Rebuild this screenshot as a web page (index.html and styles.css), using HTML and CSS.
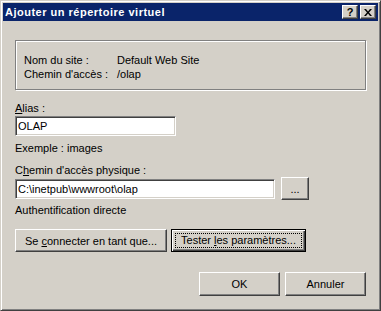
FILE: index.html
```html
<!DOCTYPE html>
<html lang="fr">
<head>
    <meta charset="UTF-8">
    <title>Ajouter un répertoire virtuel</title>
    <link rel="stylesheet" href="styles.css">
</head>
<body>
    <div class="window">
        <div class="titlebar">
            <span class="title">Ajouter un répertoire virtuel</span>
            <div class="caption-btns">
                <span class="cbtn help">?</span>
                <span class="cbtn close">
                    <svg width="8" height="7" viewBox="0 0 8 7">
                        <path d="M0 0h2l2 2.5L6 0h2L5 3.5 8 7H6L4 4.5 2 7H0l3-3.5z" fill="#000"/>
                    </svg>
                </span>
            </div>
        </div>

        <div class="content">
            <div class="group">
                <div class="info">
                    <span>Nom du site :</span><span>Default Web Site</span>
                    <span>Chemin d'accès :</span><span>/olap</span>
                </div>
            </div>

            <div class="label alias-label"><u>A</u>lias :</div>
            <input class="field alias" type="text" value="OLAP">
            <div class="label hint">Exemple : images</div>

            <div class="label path-label">C<u>h</u>emin d'accès physique :</div>
            <div class="path-row">
                <input class="field path" type="text" value="C:\inetpub\wwwroot\olap">
                <button class="btn browse">...</button>
            </div>
            <div class="label auth">Authentification directe</div>

            <div class="action-row">
                <button class="btn connect">Se <u>c</u>onnecter en tant que...</button>
                <button class="btn default test"><span class="focus">Tester <u>l</u>es paramètres...</span></button>
            </div>

            <div class="footer">
                <button class="btn ok">OK</button>
                <button class="btn cancel">Annuler</button>
            </div>
        </div>
    </div>
</body>
</html>
```

FILE: styles.css
```css
body {
    margin: 0;
    font-family: "Liberation Sans", Arial, sans-serif;
    font-size: 11px;
    color: #000;
    background: #d4d0c8;
}
.window {
    width: 381px;
    height: 311px;
    box-sizing: border-box;
    background: #d4d0c8;
    border: 1px solid;
    border-color: #d4d0c8 #404040 #404040 #d4d0c8;
    box-shadow: inset 1px 1px #fff, inset -1px -1px #808080;
    padding: 2px;
}
.titlebar {
    height: 18px;
    background: #0a246a;
    color: #fff;
    display: flex;
    align-items: center;
    justify-content: space-between;
    padding: 0 2px;
}
.title {
    font-weight: bold;
    font-size: 11px;
    letter-spacing: 0.5px;
}
.caption-btns {
    display: flex;
    gap: 2px;
}
.cbtn {
    width: 16px;
    height: 14px;
    box-sizing: border-box;
    background: #d4d0c8;
    color: #000;
    border: 1px solid;
    border-color: #fff #404040 #404040 #fff;
    box-shadow: inset -1px -1px #808080;
    display: flex;
    align-items: center;
    justify-content: center;
    font-weight: bold;
    font-size: 11px;
    line-height: 1;
}
.content {
    padding: 19px 12px 0 12px;
}
.group {
    border: 1px solid #808080;
    box-shadow: inset 1px 1px #fff, 1px 1px #fff;
    padding: 12px 8px 8px 8px;
    height: 28px;
}
.info {
    display: grid;
    grid-template-columns: 93px auto;
    line-height: 14px;
}
.label {
    line-height: 14px;
}
.alias-label {
    margin-top: 11px;
}
.field {
    display: block;
    box-sizing: border-box;
    height: 20px;
    margin: 1px 0 0 0;
    padding: 0 2px;
    font: inherit;
    color: #000;
    background: #fff;
    border: 1px solid;
    border-color: #808080 #fff #fff #808080;
    box-shadow: inset 1px 1px #404040, inset -1px -1px #d4d0c8;
    outline: none;
}
.alias {
    width: 161px;
}
.hint {
    margin-top: 5px;
}
.path-label {
    margin-top: 8px;
}
.path-row {
    display: flex;
    align-items: flex-start;
    gap: 6px;
}
.path {
    width: 260px;
    margin-top: 2px;
}
.btn {
    box-sizing: border-box;
    height: 23px;
    padding: 0;
    font: inherit;
    color: #000;
    background: #d4d0c8;
    border: 1px solid;
    border-color: #fff #404040 #404040 #fff;
    box-shadow: inset -1px -1px #808080;
}
.browse {
    width: 28px;
}
.auth {
    margin-top: 3px;
}
.action-row {
    display: flex;
    gap: 4px;
    margin-top: 12px;
}
.connect {
    width: 152px;
}
.default {
    border: 1px solid #000;
    box-shadow: inset 1px 1px #fff, inset -1px -1px #404040, inset -2px -2px #808080;
    padding: 3px;
}
.test {
    width: 135px;
}
.focus {
    display: block;
    height: 100%;
    box-sizing: border-box;
    border: 1px dotted #000;
    line-height: 13px;
}
.footer {
    display: flex;
    justify-content: flex-end;
    gap: 5px;
    margin-top: 20px;
}
.ok,
.cancel {
    width: 81px;
    height: 24px;
}
```
